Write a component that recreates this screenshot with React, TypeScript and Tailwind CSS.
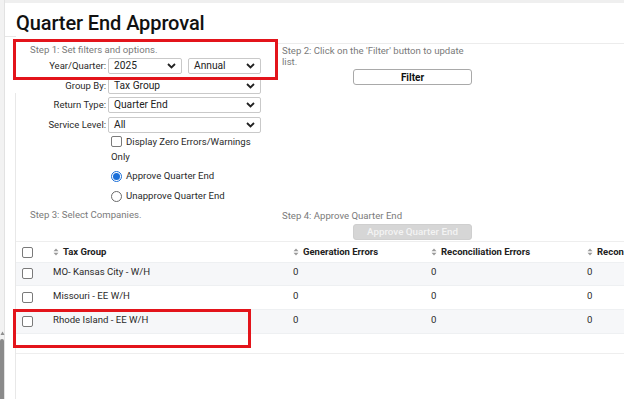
import React from "react";

const Chevron = () => (
  <svg width="9" height="6" viewBox="0 0 9 6" className="shrink-0">
    <path d="M1 1 L4.5 4.5 L8 1" fill="none" stroke="#222" strokeWidth="1.8" />
  </svg>
);

const Select = ({ value, w }: { value: string; w: string }) => (
  <div className={`${w} h-[16px] flex items-center justify-between border border-[#c9c9c9] rounded-[2px] bg-white pl-[5px] pr-[5px] text-[10.2px] text-[#222] leading-none`}>
    <span>{value}</span>
    <Chevron />
  </div>
);

const Sort = () => (
  <svg width="6" height="8" viewBox="0 0 6 8" className="shrink-0 mr-[4px]">
    <path d="M3 0.5 L5.5 3.3 L0.5 3.3 Z" fill="#9a9a9a" />
    <path d="M3 7.5 L5.5 4.7 L0.5 4.7 Z" fill="#9a9a9a" />
  </svg>
);

const Box = () => (
  <div className="w-[11px] h-[11px] border border-[#7a7a7a] rounded-[2px] bg-white shrink-0" />
);

const rows = [
  { name: "MO- Kansas City - W/H", bg: "bg-[#f6f7f9]" },
  { name: "Missouri - EE W/H", bg: "bg-white" },
  { name: "Rhode Island - EE W/H", bg: "bg-[#f6f7f9]" },
];

export default function App() {
  return (
    <div
      className="relative w-[624px] h-[399px] overflow-hidden bg-white flex"
      style={{ fontFamily: "Roboto, 'Liberation Sans', sans-serif" }}
    >
      {/* left gutter */}
      <div className="w-[16px] h-full flex flex-col shrink-0">
        <div className="flex h-full">
          <div className="w-[5px] h-full bg-[#f2f2f2] border-r border-[#e2e2e2] flex flex-col justify-end items-center">
            <svg width="5" height="5" viewBox="0 0 5 5" className="mb-[3px]">
              <path d="M2.5 0.5 L4.5 4 L0.5 4 Z" fill="#8d8d8d" />
            </svg>
            <div className="w-[4px] h-[60px] bg-[#8a8a8a] rounded-t-[2px]" />
          </div>
          <div className="flex-1 flex flex-col">
            <div className="h-[37px] border-b border-t-[3px] border-t-[#efefef] border-b-[#e6e6e6]" />
            <div className="h-[56px]" />
            <div className="flex-1 border-r border-[#e8e8e8]" />
          </div>
        </div>
      </div>

      {/* main content */}
      <div className="flex-1 flex flex-col border-t-[3px] border-[#efefef]">
        <div className="mt-[8px] h-[24px] text-[20px] leading-[24px] font-medium text-[#111] tracking-[-0.1px]">
          Quarter End Approval
        </div>

        {/* steps 1 & 2 */}
        <div className="mt-[8px] flex">
          <div className="w-[262px] flex flex-col">
            <div className="pl-[14px] pt-[1px] h-[15px] text-[9.6px] leading-[12px] text-[#7a7a7a]">
              Step 1: Set filters and options.
            </div>
            <div className="flex items-center">
              <div className="w-[92px] pr-[2px] text-right text-[9.5px] text-[#2a2a2a]">Year/Quarter:</div>
              <Select value="2025" w="w-[74px]" />
              <div className="w-[6px]" />
              <Select value="Annual" w="w-[73px]" />
            </div>
            <div className="mt-[4px] flex items-center">
              <div className="w-[92px] pr-[2px] text-right text-[9.5px] text-[#2a2a2a]">Group By:</div>
              <Select value="Tax Group" w="w-[153px]" />
            </div>
            <div className="mt-[3px] flex items-center">
              <div className="w-[92px] pr-[2px] text-right text-[9.5px] text-[#2a2a2a]">Return Type:</div>
              <Select value="Quarter End" w="w-[153px]" />
            </div>
            <div className="mt-[4px] flex items-center">
              <div className="w-[92px] pr-[2px] text-right text-[9.5px] text-[#2a2a2a]">Service Level:</div>
              <Select value="All" w="w-[153px]" />
            </div>
            <div className="mt-[1px] ml-[95px] w-[155px] text-[9.6px] leading-[15px] text-[#2a2a2a]">
              <div className="flex items-center gap-[4px]">
                <Box />
                <span>Display Zero Errors/Warnings</span>
              </div>
              <div>Only</div>
            </div>
            <div className="mt-[5px] ml-[95px] flex items-center gap-[4px] h-[15px] text-[9.6px] text-[#2a2a2a]">
              <div className="w-[11px] h-[11px] rounded-full border border-[#1a6fd9] flex items-center justify-center">
                <div className="w-[7px] h-[7px] rounded-full bg-[#1a6fd9]" />
              </div>
              <span>Approve Quarter End</span>
            </div>
            <div className="mt-[5px] ml-[95px] flex items-center gap-[4px] h-[15px] text-[9.6px] text-[#2a2a2a]">
              <div className="w-[11px] h-[11px] rounded-full border border-[#6a6a6a]" />
              <span>Unapprove Quarter End</span>
            </div>
          </div>
          <div className="flex-1 border-t border-[#ececec] pl-[4px]">
            <div className="pt-[1px] text-[9.6px] leading-[11px] text-[#7a7a7a]">
              Step 2: Click on the 'Filter' button to update
              <br />
              list.
            </div>
            <div className="mt-[2px] ml-[71px] w-[119px] h-[16px] border border-[#a9a9a9] rounded-[3px] bg-white flex items-center justify-center text-[10px] font-bold text-[#111]">
              Filter
            </div>
          </div>
        </div>

        {/* steps 3 & 4 */}
        <div className="mt-[5px] flex">
          <div className="w-[262px] pl-[14px] h-[12px] text-[9.6px] leading-[12px] text-[#7a7a7a]">
            Step 3: Select Companies.
          </div>
          <div className="flex-1 pl-[4px]">
            <div className="mt-[1px] h-[12px] text-[9.6px] leading-[12px] text-[#7a7a7a]">
              Step 4: Approve Quarter End
            </div>
            <div className="mt-[2px] ml-[71px] w-[119px] h-[16px] border border-[#cfcfcf] rounded-[3px] bg-[#d6d6d6] flex items-center justify-center text-[9.8px] font-medium text-[#f3f3f3]">
              Approve Quarter End
            </div>
          </div>
        </div>

        {/* table */}
        <div className="mt-[1px] border-t border-[#eeeeee]">
          <div className="h-[21px] flex items-center bg-white text-[9.5px] font-bold text-[#222] border-b border-[#eef0f2]">
            <div className="w-[31px] pl-[6px]"><Box /></div>
            <div className="w-[240px] pl-[6px] flex items-center"><Sort />Tax Group</div>
            <div className="w-[138px] pl-[6px] flex items-center"><Sort />Generation Errors</div>
            <div className="w-[156px] pl-[6px] flex items-center"><Sort />Reconciliation Errors</div>
            <div className="flex-1 pl-[6px] flex items-center whitespace-nowrap overflow-hidden"><Sort />Recon</div>
          </div>
          {rows.map((r, i) => (
            <div key={i} className={`${i === 0 ? "h-[23px]" : "h-[24px]"} flex items-center pb-[3px] ${r.bg} text-[9.6px] text-[#2a2a2a] border-b border-[#eef0f2]`}>
              <div className="w-[31px] pl-[6px] pt-[2px]"><Box /></div>
              <div className="w-[240px] pl-[6px]">{r.name}</div>
              <div className="w-[138px] pl-[6px]">0</div>
              <div className="w-[156px] pl-[6px]">0</div>
              <div className="flex-1 pl-[6px]">0</div>
            </div>
          ))}
          <div className="h-[20px] border-b border-[#eeeeee]" />
        </div>
      </div>

      {/* annotation boxes */}
      <div className="absolute left-[13px] top-[39px] w-[265px] h-[41px] border-[3px] border-[#e3141b] pointer-events-none" />
      <div className="absolute left-[13px] top-[309px] w-[238px] h-[39px] border-[3px] border-[#e3141b] pointer-events-none" />
    </div>
  );
}
